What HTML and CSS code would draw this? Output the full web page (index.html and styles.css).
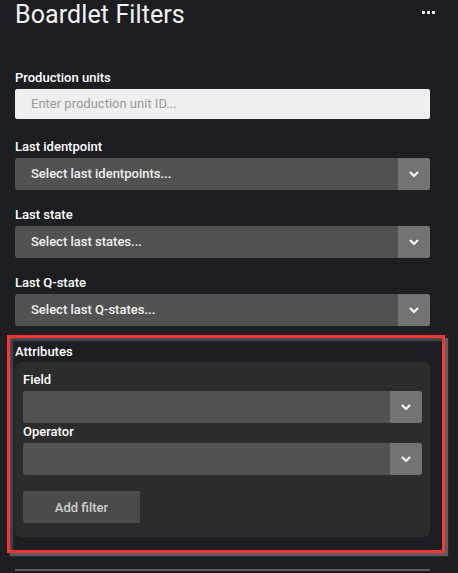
FILE: index.html
```html
<!DOCTYPE html>
<html>
<head>
<meta charset="utf-8">
<link rel="stylesheet" href="styles.css">
</head>
<body>
<div class="panel">
  <header class="header">
    <h1 class="title">Boardlet Filters</h1>
    <div class="more"><span></span><span></span><span></span></div>
  </header>

  <div class="group first">
    <label class="label">Production units</label>
    <div class="input">Enter production unit ID...</div>
  </div>

  <div class="group">
    <label class="label">Last identpoint</label>
    <div class="select"><span class="value">Select last identpoints...</span><span class="chev"><svg width="10" height="6" viewBox="0 0 10 6"><path d="M1 1 L5 5 L9 1" fill="none" stroke="#fff" stroke-width="2"/></svg></span></div>
  </div>

  <div class="group">
    <label class="label">Last state</label>
    <div class="select"><span class="value">Select last states...</span><span class="chev"><svg width="10" height="6" viewBox="0 0 10 6"><path d="M1 1 L5 5 L9 1" fill="none" stroke="#fff" stroke-width="2"/></svg></span></div>
  </div>

  <div class="group">
    <label class="label">Last Q-state</label>
    <div class="select"><span class="value">Select last Q-states...</span><span class="chev"><svg width="10" height="6" viewBox="0 0 10 6"><path d="M1 1 L5 5 L9 1" fill="none" stroke="#fff" stroke-width="2"/></svg></span></div>
  </div>

  <div class="attrs">
    <label class="label">Attributes</label>
    <div class="card">
      <label class="label">Field</label>
      <div class="select"><span class="value"></span><span class="chev"><svg width="10" height="6" viewBox="0 0 10 6"><path d="M1 1 L5 5 L9 1" fill="none" stroke="#fff" stroke-width="2"/></svg></span></div>
      <label class="label op">Operator</label>
      <div class="select"><span class="value"></span><span class="chev"><svg width="10" height="6" viewBox="0 0 10 6"><path d="M1 1 L5 5 L9 1" fill="none" stroke="#fff" stroke-width="2"/></svg></span></div>
      <button class="btn">Add filter</button>
    </div>
  </div>

  <div class="divider"></div>
  <div class="highlight"></div>
</div>
</body>
</html>
```
FILE: styles.css
```css
* { box-sizing: border-box; }
html, body {
  margin: 0;
  padding: 0;
  background: #1c1e22;
  height: 100%;
  overflow: hidden;
}
body {
  font-family: Roboto, "Liberation Sans", sans-serif;
  color: #fff;
}
.panel {
  position: relative;
  padding: 0 28px 0 15px;
}
.header {
  display: flex;
  justify-content: space-between;
  align-items: flex-start;
  height: 70px;
}
.title {
  margin: 0;
  font-size: 25px;
  font-weight: 400;
  line-height: 30px;
  color: #f4f4f4;
  letter-spacing: 0.1px;
}
.more {
  display: flex;
  gap: 2px;
  margin-top: 11px;
  margin-right: -5px;
}
.more span {
  width: 3px;
  height: 3px;
  background: #fff;
  border-radius: 1px;
}
.group { margin-bottom: 17px; }
.group.first { margin-bottom: 20px; }
.label {
  display: block;
  font-size: 13px;
  font-weight: 500;
  line-height: 16px;
  margin-bottom: 3px;
  color: #fff;
}
.input {
  height: 30px;
  background: #efefef;
  border-radius: 2px;
  padding-left: 16px;
  font-size: 13px;
  line-height: 30px;
  color: #9a9a9a;
}
.select {
  display: flex;
  height: 32px;
  background: #525252;
  border-radius: 3px;
  overflow: hidden;
}
.select .value {
  flex: 1;
  padding-left: 16px;
  font-size: 13px;
  font-weight: 500;
  line-height: 32px;
  color: #f0f0f0;
}
.chev {
  width: 32px;
  background: #737373;
  display: flex;
  align-items: center;
  justify-content: center;
}
.attrs { margin-top: 18px; }
.attrs > .label { margin-bottom: 2px; }
.card {
  background: #2c2c2c;
  border-radius: 6px;
  padding: 10px 8px 14px 8px;
}
.card .op { margin-top: 1px; }
.btn {
  display: block;
  margin-top: 16px;
  width: 117px;
  height: 32px;
  border: none;
  border-radius: 2px;
  background: #4b4b4b;
  color: #cfcfcf;
  font-family: Roboto, "Liberation Sans", sans-serif;
  font-size: 13px;
  font-weight: 500;
}
.divider {
  margin-top: 32px;
  height: 2px;
  background: #5a5a5a;
}
.highlight {
  position: absolute;
  left: 7px;
  top: 335px;
  width: 438px;
  height: 218px;
  border: 3px solid #ff3333;
  box-shadow: 3px 3px 1px rgba(110,110,110,0.8), inset 3px 3px 2px rgba(100,100,100,0.6);
  pointer-events: none;
}
```
